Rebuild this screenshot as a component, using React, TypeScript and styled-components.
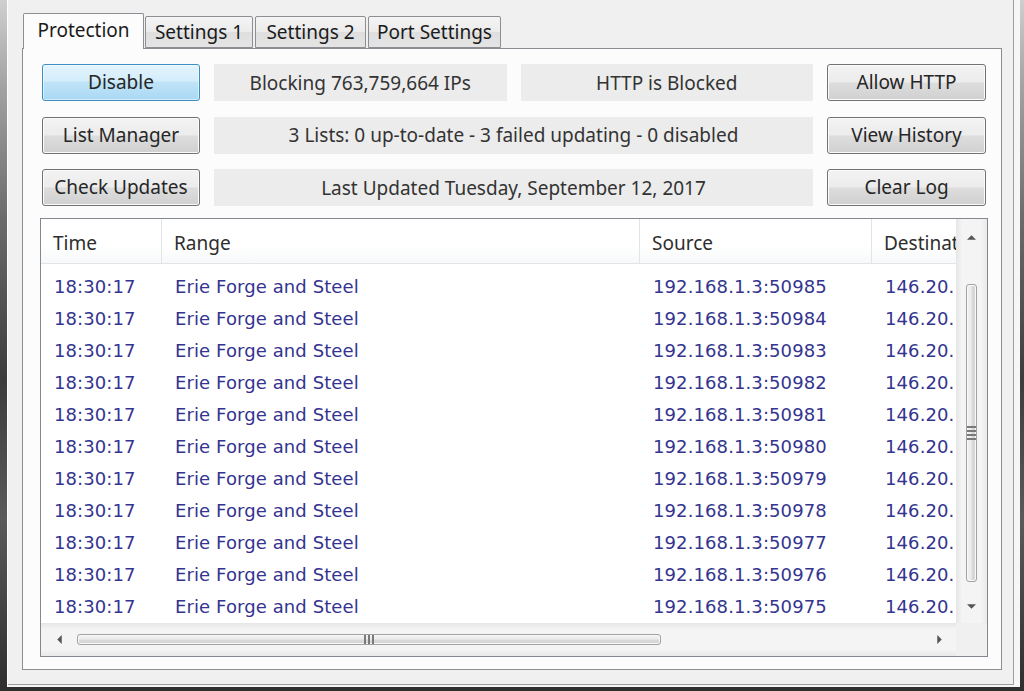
import React from "react";
import styled, { createGlobalStyle } from "styled-components";

const GlobalStyle = createGlobalStyle`
  html, body {
    margin: 0;
    padding: 0;
  }
  body {
    width: 1024px;
    height: 691px;
    overflow: hidden;
    font-family: "Noto Sans", "Open Sans", sans-serif;
  }
  * {
    box-sizing: border-box;
  }
`;

const Desktop = styled.div`
  width: 1024px;
  height: 691px;
  display: flex;
  align-items: flex-start;
  padding: 0 4px 0 7px;
  background: linear-gradient(
    180deg,
    #cfcfcf 0%,
    #a4a4a4 12%,
    #6a6a6a 32%,
    #3c3c3c 55%,
    #5a5a5a 75%,
    #2e2e2e 100%
  );
`;

const Window = styled.div`
  flex: 1;
  height: 687px;
  display: flex;
  padding: 0 6px 2px 0;
  background: #f6f6f6;
  border-left: 1px solid #fdfdfd;
`;

const Frame = styled.div`
  flex: 1;
  display: flex;
  flex-direction: column;
  padding: 13px 11px 14px 14px;
  background: #f0f0f0;
  border-right: 1px solid #9c9c9c;
  border-bottom: 1px solid #9c9c9c;
`;

const TabStrip = styled.div`
  height: 35px;
  display: flex;
  align-items: flex-end;
  gap: 2px;
  padding-left: 1px;
`;

const Tab = styled.div<{ $active?: boolean; $width: number }>`
  width: ${(p) => p.$width}px;
  height: ${(p) => (p.$active ? 36 : 32)}px;
  margin-bottom: ${(p) => (p.$active ? -1 : 0)}px;
  margin-right: ${(p) => (p.$active ? -1 : 0)}px;
  display: flex;
  align-items: center;
  justify-content: center;
  font-size: 19px;
  color: #1a1a1a;
  border: 1px solid #8c8e94;
  border-bottom: ${(p) => (p.$active ? "none" : "1px solid #8c8e94")};
  border-radius: 2px 2px 0 0;
  background: ${(p) =>
    p.$active
      ? "#fcfcfc"
      : "linear-gradient(180deg, #f4f4f4 0%, #ebebeb 50%, #dedede 51%, #e4e4e4 100%)"};
  position: relative;
  z-index: ${(p) => (p.$active ? 2 : 1)};
  padding-bottom: ${(p) => (p.$active ? 4 : 0)}px;
`;

const Page = styled.div`
  flex: 1;
  display: flex;
  flex-direction: column;
  padding: 15px 15px 12px 19px;
  background: #fcfcfc;
  border: 1px solid #8c8e94;
`;

const Controls = styled.div`
  display: grid;
  grid-template-columns: 158px 1fr 1fr 159px;
  grid-template-rows: 37px 37px 37px;
  column-gap: 14px;
  row-gap: 15.5px;
`;

const Button = styled.button<{ $focused?: boolean }>`
  font-family: "Noto Sans", "Open Sans", sans-serif;
  font-size: 19px;
  color: #262626;
  padding: 0 0 1px;
  border-radius: 3px;
  border: 1px solid ${(p) => (p.$focused ? "#3c8fc0" : "#727272")};
  box-shadow: inset 0 0 0 1px ${(p) => (p.$focused ? "rgba(255,255,255,0.5)" : "#fbfbfb")};
  background: ${(p) =>
    p.$focused
      ? "linear-gradient(180deg, #e4f4fc 0%, #d3edfb 45%, #bfe4f8 50%, #a9d8f3 100%)"
      : "linear-gradient(180deg, #f3f3f3 0%, #ececec 48%, #dddddd 52%, #d0d0d0 100%)"};
`;

const Info = styled.div<{ $span?: number }>`
  grid-column: span ${(p) => p.$span || 1};
  display: flex;
  align-items: center;
  justify-content: center;
  background: #ececec;
  font-size: 19px;
  color: #333333;
  white-space: nowrap;
`;

const ListView = styled.div`
  flex: 1;
  margin: 12px -2px 0 -2px;
  border: 1px solid #828790;
  background: #ffffff;
  display: grid;
  grid-template-columns: 1fr 31px;
  grid-template-rows: 1fr 33px;
  overflow: hidden;
`;

const TableArea = styled.div`
  overflow: hidden;
  display: flex;
  flex-direction: column;
`;

const cols = "121px 478px 232px 200px";

const HeaderRow = styled.div`
  height: 45px;
  flex: none;
  display: grid;
  grid-template-columns: ${cols};
  background: linear-gradient(180deg, #ffffff 0%, #ffffff 60%, #f7f8f9 100%);
  border-bottom: 1px solid #e3e4e6;
  margin-bottom: 6px;
`;

const HeaderCell = styled.div`
  display: flex;
  align-items: center;
  padding: 4px 0 0 12px;
  font-size: 19px;
  color: #2e2e2e;
  border-right: 1px solid #e3e4e6;
  white-space: nowrap;
  overflow: hidden;
`;

const Row = styled.div`
  height: 32px;
  flex: none;
  display: grid;
  grid-template-columns: ${cols};
`;

const Cell = styled.div`
  display: flex;
  align-items: center;
  padding-left: 13px;
  font-family: "DejaVu Sans", Verdana, sans-serif;
  font-size: 18px;
  letter-spacing: 0.1px;
  color: #34348f;
  white-space: nowrap;
  overflow: hidden;
`;

const VScroll = styled.div`
  display: flex;
  flex-direction: column;
  align-items: center;
  background: linear-gradient(90deg, #e6e6e6 0%, #f4f4f4 20%, #f4f4f4 80%, #e9e9e9 100%);
`;

const HScroll = styled.div`
  display: flex;
  align-items: center;
  background: linear-gradient(180deg, #e6e6e6 0%, #f4f4f4 20%, #f4f4f4 80%, #e9e9e9 100%);
`;

const Corner = styled.div`
  background: #f0f0f0;
`;

const ArrowBox = styled.div<{ $size: number; $vertical?: boolean }>`
  flex: none;
  width: ${(p) => (p.$vertical ? "100%" : `${p.$size}px`)};
  height: ${(p) => (p.$vertical ? `${p.$size}px` : "100%")};
  display: flex;
  align-items: center;
  justify-content: center;
`;

const Track = styled.div<{ $vertical?: boolean }>`
  flex: 1;
  display: flex;
  flex-direction: ${(p) => (p.$vertical ? "column" : "row")};
  align-items: stretch;
  padding: ${(p) => (p.$vertical ? "0 2px" : "3px 0")};
`;

const Thumb = styled.div<{ $vertical?: boolean }>`
  display: flex;
  align-items: center;
  justify-content: center;
  border: 1px solid #a2a2a2;
  border-radius: 3px;
  box-shadow: inset 0 0 0 1px #f8f8f8;
  background: ${(p) =>
    p.$vertical
      ? "linear-gradient(90deg, #f2f2f2 0%, #ebebeb 45%, #dadada 55%, #d3d3d3 100%)"
      : "linear-gradient(180deg, #f2f2f2 0%, #ebebeb 45%, #dadada 55%, #d3d3d3 100%)"};
`;

const Grip = styled.div<{ $vertical?: boolean }>`
  display: flex;
  flex-direction: ${(p) => (p.$vertical ? "column" : "row")};
  gap: 2px;
  span {
    display: block;
    background: #7a7a7a;
    width: ${(p) => (p.$vertical ? "9px" : "2px")};
    height: ${(p) => (p.$vertical ? "2px" : "9px")};
  }
`;

function Arrow({ dir }: { dir: "up" | "down" | "left" | "right" }) {
  const pts = {
    up: "0,5 5,0 10,5",
    down: "0,0 10,0 5,5",
    left: "5,0 5,10 0,5",
    right: "0,0 0,10 5,5",
  }[dir];
  const horiz = dir === "left" || dir === "right";
  return (
    <svg width={horiz ? 5 : 9} height={horiz ? 9 : 5} viewBox={horiz ? "0 0 5 10" : "0 0 10 5"}>
      <polygon points={pts} fill="#555555" />
    </svg>
  );
}

const tabs = [
  { label: "Protection", width: 121, active: true },
  { label: "Settings 1", width: 108 },
  { label: "Settings 2", width: 111 },
  { label: "Port Settings", width: 133 },
];

const ports = [50985, 50984, 50983, 50982, 50981, 50980, 50979, 50978, 50977, 50976, 50975];

function App() {
  return (
    <>
      <GlobalStyle />
      <Desktop>
        <Window>
          <Frame>
            <TabStrip>
              {tabs.map((t) => (
                <Tab key={t.label} $active={t.active} $width={t.width}>
                  {t.label}
                </Tab>
              ))}
            </TabStrip>
            <Page>
              <Controls>
                <Button $focused>Disable</Button>
                <Info>Blocking 763,759,664 IPs</Info>
                <Info>HTTP is Blocked</Info>
                <Button>Allow HTTP</Button>

                <Button>List Manager</Button>
                <Info $span={2}>3 Lists: 0 up-to-date - 3 failed updating - 0 disabled</Info>
                <Button>View History</Button>

                <Button>Check Updates</Button>
                <Info $span={2}>Last Updated Tuesday, September 12, 2017</Info>
                <Button>Clear Log</Button>
              </Controls>

              <ListView>
                <TableArea>
                  <HeaderRow>
                    <HeaderCell>Time</HeaderCell>
                    <HeaderCell>Range</HeaderCell>
                    <HeaderCell>Source</HeaderCell>
                    <HeaderCell>Destination</HeaderCell>
                  </HeaderRow>
                  {ports.map((port) => (
                    <Row key={port}>
                      <Cell>18:30:17</Cell>
                      <Cell>Erie Forge and Steel</Cell>
                      <Cell>192.168.1.3:{port}</Cell>
                      <Cell>146.20.110.11:443</Cell>
                    </Row>
                  ))}
                </TableArea>

                <VScroll>
                  <ArrowBox $vertical $size={36}>
                    <Arrow dir="up" />
                  </ArrowBox>
                  <Track $vertical>
                    <Thumb $vertical style={{ marginTop: 29, height: 298 }}>
                      <Grip $vertical>
                        <span />
                        <span />
                        <span />
                        <span />
                      </Grip>
                    </Thumb>
                  </Track>
                  <ArrowBox $vertical $size={34}>
                    <Arrow dir="down" />
                  </ArrowBox>
                </VScroll>

                <HScroll>
                  <ArrowBox $size={36}>
                    <Arrow dir="left" />
                  </ArrowBox>
                  <Track>
                    <Thumb style={{ width: 584 }}>
                      <Grip>
                        <span />
                        <span />
                        <span />
                      </Grip>
                    </Thumb>
                  </Track>
                  <ArrowBox $size={34}>
                    <Arrow dir="right" />
                  </ArrowBox>
                </HScroll>
                <Corner />
              </ListView>
            </Page>
          </Frame>
        </Window>
      </Desktop>
    </>
  );
}

export default App;
